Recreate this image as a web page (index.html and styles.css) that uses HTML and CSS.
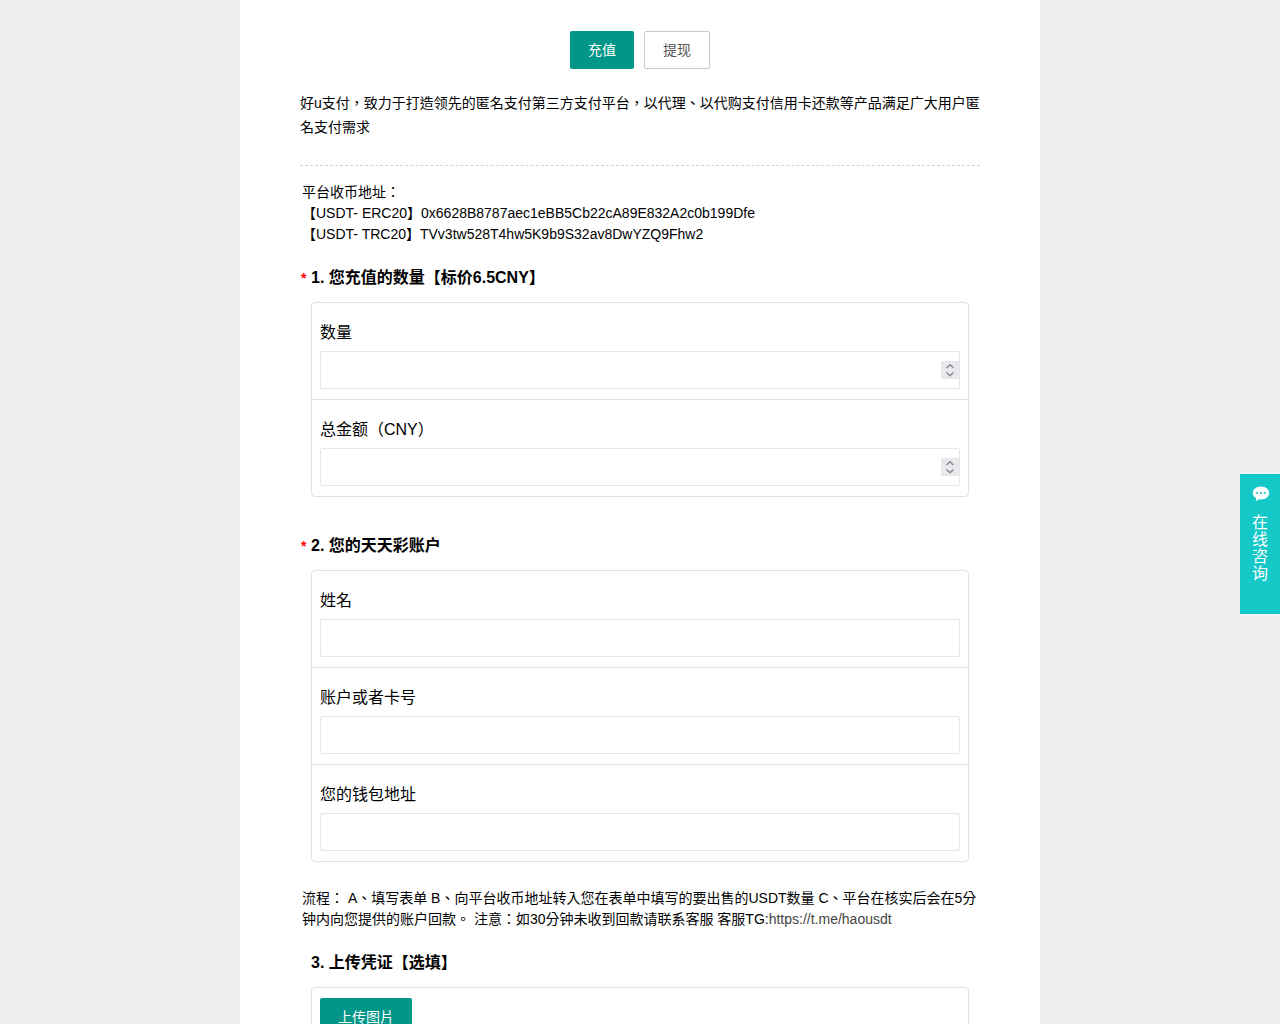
FILE: index.html
```html
<!DOCTYPE html>
<html lang="zh-Hant">
<head>
<meta charset="utf-8">
<meta name="viewport" content="width=device-width, initial-scale=1">
<title>充值</title>
<link rel="stylesheet" href="styles.css">
</head>
<body>
<main class="page">
  <nav class="tabs">
    <button type="button" class="btn btn-primary">充值</button>
    <button type="button" class="btn btn-plain">提现</button>
  </nav>
  <p class="intro">好u支付，致力于打造领先的匿名支付第三方支付平台，以代理、以代购支付信用卡还款等产品满足广大用户匿名支付需求</p>
  <form class="survey">
    <p class="note">平台收币地址：<br>【USDT- ERC20】0x6628B8787aec1eBB5Cb22cA89E832A2c0b199Dfe<br>【USDT- TRC20】TVv3tw528T4hw5K9b9S32av8DwYZQ9Fhw2</p>

    <section class="question">
      <h2 class="title"><span class="star">*</span>1. 您充值的数量【标价6.5CNY】</h2>
      <div class="box">
        <div class="field">
          <label for="amount">数量</label>
          <div class="control">
            <input id="amount" type="number">
            <svg class="spin" viewBox="0 0 18 18" aria-hidden="true"><path d="M5.500 7 9 3.800 12.500 7M5.500 11.500 9 14.700 12.500 11.500"/></svg>
          </div>
        </div>
        <div class="field">
          <label for="total">总金额（CNY）</label>
          <div class="control">
            <input id="total" type="number">
            <svg class="spin" viewBox="0 0 18 18" aria-hidden="true"><path d="M5.500 7 9 3.800 12.500 7M5.500 11.500 9 14.700 12.500 11.500"/></svg>
          </div>
        </div>
      </div>
    </section>

    <section class="question">
      <h2 class="title"><span class="star">*</span>2. 您的天天彩账户</h2>
      <div class="box">
        <div class="field">
          <label for="name">姓名</label>
          <input id="name" type="text">
        </div>
        <div class="field">
          <label for="account">账户或者卡号</label>
          <input id="account" type="text">
        </div>
        <div class="field">
          <label for="wallet">您的钱包地址</label>
          <input id="wallet" type="text">
        </div>
      </div>
    </section>

    <p class="note note-flow">流程： A、填写表单 B、向平台收币地址转入您在表单中填写的要出售的USDT数量 C、平台在核实后会在5分钟内向您提供的账户回款。 注意：如30分钟未收到回款请联系客服 客服TG:<a href="https://t.me/haousdt">https://t.me/haousdt</a></p>

    <section class="question">
      <h2 class="title"><span class="star"></span>3. 上传凭证【选填】</h2>
      <div class="box upload">
        <button type="button" class="btn btn-primary">上传图片</button>
      </div>
    </section>
  </form>
</main>
<a class="chat" href="#chat">
  <svg class="chat-icon" viewBox="0 0 18 16" aria-hidden="true"><path fill="#fff" d="M9 .5c4.600 0 8.200 2.900 8.200 6.500s-3.600 6.500-8.200 6.500c-.9 0-1.800-.1-2.600-.3L3.800 15.500l.3-3.300C2.100 11 .8 9.200.8 7 .8 3.400 4.400.5 9 .5z"/><g fill="#14c8c8"><circle cx="5.200" cy="7" r="1.100"/><circle cx="9" cy="7" r="1.100"/><circle cx="12.800" cy="7" r="1.100"/></g></svg>
  <span class="chat-text">在线咨询</span>
</a>
</body>
</html>
```
FILE: styles.css
```css
* {
  box-sizing: border-box;
}

body {
  margin: 0;
  height: 100vh;
  overflow: hidden;
  background: #efefef;
  color: #000;
  font: 14px/24px "Liberation Sans", "Noto Sans CJK TC", sans-serif;
}

.page {
  max-width: 800px;
  height: 100%;
  overflow-y: auto;
  scrollbar-width: none;
  margin: 0 auto;
  padding: 31px 60px 40px;
  background: #fff;
}

.tabs {
  display: flex;
  justify-content: center;
  gap: 10px;
}

.btn {
  height: 38px;
  padding: 0 18px;
  border: 0;
  border-radius: 2px;
  font: inherit;
  cursor: pointer;
}

.btn-primary {
  background: #009688;
  color: #fff;
}

.btn-plain {
  border: 1px solid #c9c9c9;
  background: #fff;
  color: #555;
}

.intro {
  margin: 22px 0 0;
  padding-bottom: 26px;
  border-bottom: 1px dashed #d2d2d2;
}

.survey {
  padding: 16px 11px 0;
}

.note {
  margin: 0 -9px 21px;
  line-height: 21px;
}

.note a {
  color: #444;
  text-decoration: none;
}

.note-flow {
  margin-top: -11px;
}

.question {
  margin-bottom: 37px;
}

.title {
  display: flex;
  margin: 0 0 12px -10px;
  font-size: 16px;
  line-height: 24px;
}

.star {
  width: 10px;
  color: #f00;
  font-size: 14px;
}

.box {
  border: 1px solid #e0e0e0;
  border-radius: 4px;
}

.field {
  padding: 18px 8px 10px;
}

.field + .field {
  border-top: 1px solid #e0e0e0;
}

.field label {
  display: block;
  margin-bottom: 6px;
  font-size: 16px;
}

.field input {
  display: block;
  width: 100%;
  height: 38px;
  padding: 0 10px;
  border: 1px solid #e6e6e6;
  border-radius: 2px;
  background: #fff;
  font: inherit;
}

.field input[type="number"] {
  appearance: textfield;
}

.control {
  position: relative;
}

.spin {
  position: absolute;
  top: 10px;
  right: 1px;
  width: 18px;
  height: 18px;
  background: #e9e9ed;
  fill: none;
  stroke: #8c8c90;
  stroke-width: 1.500;
}

.upload {
  padding: 10px 8px;
}

.chat {
  position: fixed;
  top: 474px;
  right: 0;
  display: flex;
  flex-direction: column;
  align-items: center;
  gap: 12px;
  width: 40px;
  height: 140px;
  padding-top: 12px;
  background: #14c8c8;
  color: #fff;
  text-decoration: none;
}

.chat-icon {
  width: 18px;
  height: 16px;
  margin-left: 2px;
}

.chat-text {
  width: 16px;
  font-size: 16px;
  line-height: 17px;
  word-break: break-all;
}
```
